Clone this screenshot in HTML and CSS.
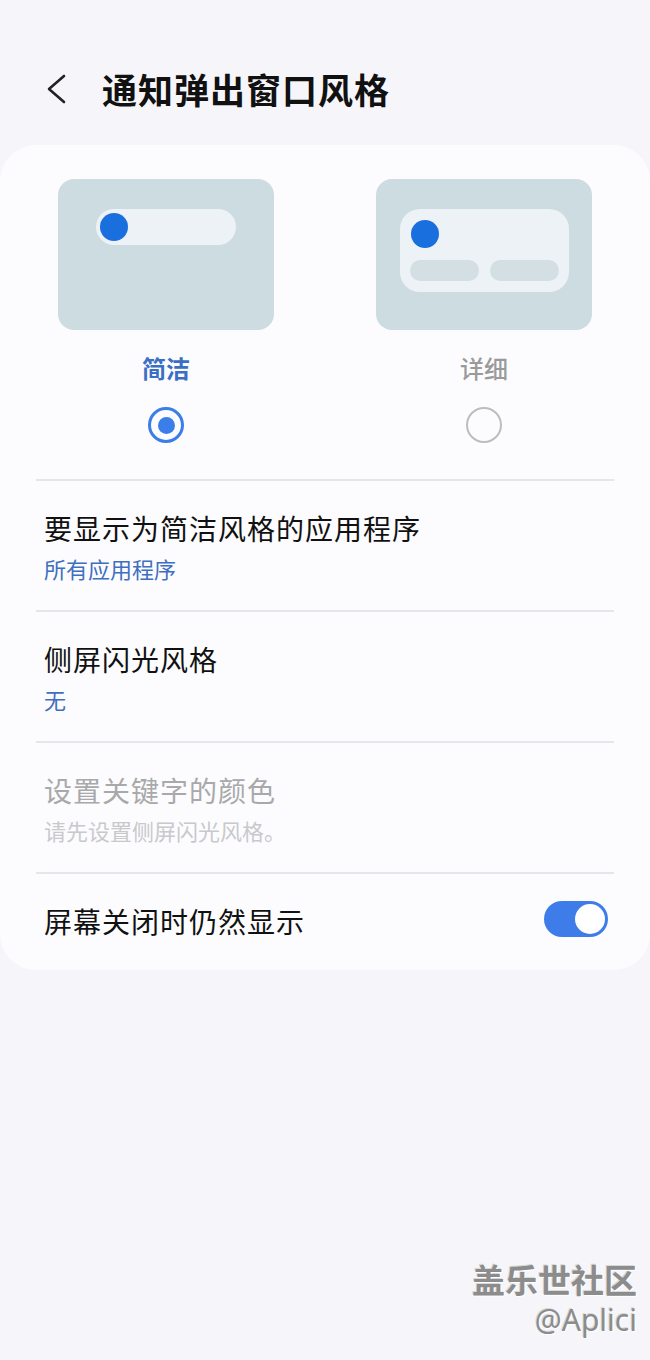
FILE: index.html
```html
<!DOCTYPE html>
<html lang="zh-CN">
<head>
    <meta charset="UTF-8">
    <meta name="viewport" content="width=device-width, initial-scale=1.0">
    <title>通知弹出窗口风格</title>
    <link rel="stylesheet" href="styles.css">
</head>
<body>
    <header class="top-bar">
        <svg class="back" width="24" height="34" viewBox="0 0 24 34">
            <path d="M20 4 L5 17 L20 30" fill="none" stroke="#222" stroke-width="2.6" stroke-linecap="round" stroke-linejoin="round"/>
        </svg>
        <h1>通知弹出窗口风格</h1>
    </header>

    <main class="card">
        <!-- 样式选择 -->
        <div class="styles">
            <div class="style-option">
                <div class="preview">
                    <div class="pill"><span class="dot"></span></div>
                </div>
                <div class="label active">简洁</div>
                <span class="radio checked"></span>
            </div>
            <div class="style-option">
                <div class="preview">
                    <div class="panel">
                        <span class="dot"></span>
                        <div class="bars"><span></span><span></span></div>
                    </div>
                </div>
                <div class="label">详细</div>
                <span class="radio"></span>
            </div>
        </div>

        <!-- 设置列表 -->
        <ul class="list">
            <li class="row">
                <div class="title">要显示为简洁风格的应用程序</div>
                <div class="sub">所有应用程序</div>
            </li>
            <li class="row">
                <div class="title">侧屏闪光风格</div>
                <div class="sub">无</div>
            </li>
            <li class="row disabled">
                <div class="title">设置关键字的颜色</div>
                <div class="sub">请先设置侧屏闪光风格。</div>
            </li>
            <li class="row switch-row">
                <div class="title">屏幕关闭时仍然显示</div>
                <span class="toggle on"><span class="knob"></span></span>
            </li>
        </ul>
    </main>

    <div class="watermark">
        <div class="wm-name">盖乐世社区</div>
        <div class="wm-user">@Aplici</div>
    </div>
</body>
</html>
```

FILE: styles.css
```css
body {
    margin: 0;
    background: #f6f6fa;
    font-family: "Noto Sans CJK SC", "Noto Sans", sans-serif;
    color: #111;
    height: 1360px;
    position: relative;
    overflow: hidden;
}
.top-bar {
    display: flex;
    align-items: center;
    height: 50px;
    padding: 64px 0 31px 44px;
}
.back {
    display: block;
    margin-right: 34px;
}
.top-bar h1 {
    margin: 0;
    font-size: 35px;
    font-weight: 700;
    line-height: 50px;
    letter-spacing: 1px;
}
.card {
    background: #fcfcfe;
    border-radius: 36px;
    height: 825px;
    box-sizing: border-box;
    padding-top: 34px;
}
.styles {
    display: flex;
    justify-content: center;
    gap: 102px;
}
.style-option {
    display: flex;
    flex-direction: column;
    align-items: center;
    width: 216px;
}
.preview {
    width: 216px;
    height: 151px;
    border-radius: 16px;
    background: #cddce1;
    box-sizing: border-box;
    padding-top: 30px;
}
.pill {
    width: 140px;
    height: 36px;
    margin-left: 38px;
    border-radius: 18px;
    background: #edf2f6;
    display: flex;
    align-items: center;
    padding-left: 4px;
    box-sizing: border-box;
}
.dot {
    display: block;
    width: 28px;
    height: 28px;
    border-radius: 50%;
    background: #1a6fdf;
}
.panel {
    width: 169px;
    height: 83px;
    margin-left: 24px;
    border-radius: 20px;
    background: #edf2f6;
    box-sizing: border-box;
    padding: 11px 10px 0 10px;
}
.panel .dot {
    margin-left: 1px;
}
.bars {
    display: flex;
    gap: 11px;
    margin-top: 12px;
}
.bars span {
    width: 69px;
    height: 21px;
    border-radius: 11px;
    background: #d3dfe3;
}
.label {
    margin-top: 23px;
    font-size: 24px;
    line-height: 30px;
    font-weight: 500;
    color: #9a9a9a;
}
.label.active {
    color: #3a6fc4;
    font-weight: 700;
}
.radio {
    margin-top: 24px;
    width: 32px;
    height: 32px;
    border-radius: 50%;
    border: 2px solid #bdbdbd;
    display: flex;
    align-items: center;
    justify-content: center;
}
.radio.checked {
    width: 30px;
    height: 30px;
    border: 3px solid #3b7de9;
}
.radio.checked::after {
    content: "";
    width: 17px;
    height: 17px;
    border-radius: 50%;
    background: #3b7de9;
}
.list {
    list-style: none;
    margin: 36px 36px 0 36px;
    padding: 0;
}
.row {
    border-top: 2px solid #e6e6ea;
    padding: 27px 6px 27px 8px;
}
.title {
    font-size: 28px;
    line-height: 40px;
    letter-spacing: 1px;
}
.sub {
    margin-top: 5px;
    font-size: 22px;
    line-height: 30px;
    color: #3f6fbf;
}
.disabled .title {
    color: #a9a9ab;
}
.disabled .sub {
    color: #c9c9cc;
}
.switch-row {
    display: flex;
    align-items: center;
    justify-content: space-between;
}
.toggle {
    width: 64px;
    height: 36px;
    border-radius: 18px;
    background: #3e7ce9;
    display: flex;
    align-items: center;
    justify-content: flex-end;
    padding-right: 3px;
    box-sizing: border-box;
    margin-top: -4px;
}
.knob {
    width: 30px;
    height: 30px;
    border-radius: 50%;
    background: #fff;
}
.watermark {
    position: absolute;
    right: 13px;
    top: 1258px;
    text-align: right;
    color: #8c8c8c;
    text-shadow: 1px 1px 0 #fff, -1px -1px 0 #d8d8d8;
}
.wm-name {
    font-size: 33px;
    font-weight: 700;
    line-height: 42px;
}
.wm-user {
    font-family: "Noto Sans", "Open Sans", sans-serif;
    font-size: 30px;
    line-height: 40px;
}
```
